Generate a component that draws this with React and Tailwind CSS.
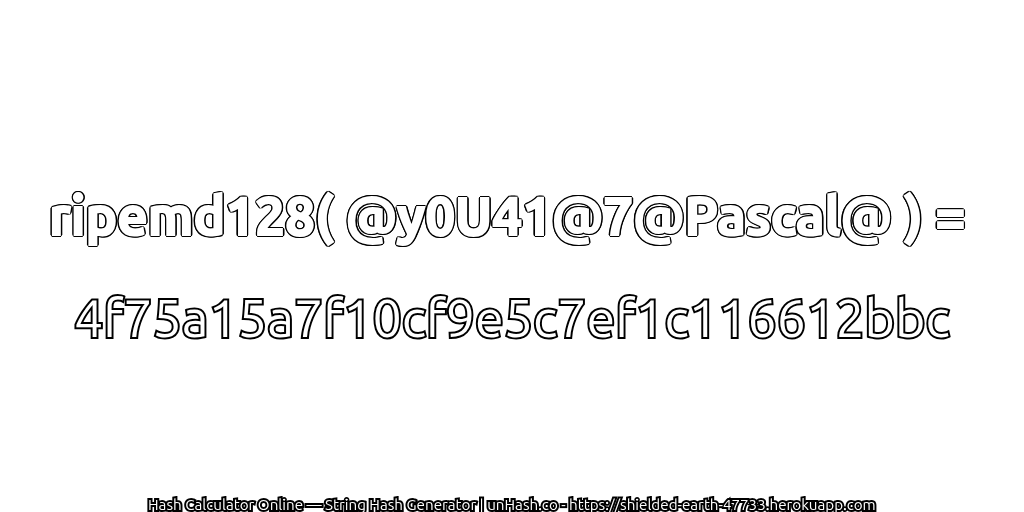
export default function App() {
  const outline = "[-webkit-text-stroke:4px_#000] [paint-order:stroke_fill] text-white [will-change:transform]";
  return (
    <div className="w-[1024px] h-[512px] bg-white flex flex-col items-center font-['Ubuntu','Noto_Sans','Open_Sans',sans-serif] overflow-hidden">
      <div className="flex-1 flex flex-col items-center pt-[185px]">
        <div className="text-[53px] leading-[62px] font-bold whitespace-nowrap text-white pr-[10px] [-webkit-text-stroke:2px_#fff] [will-change:transform] [text-shadow:2.4px_0_0_#000,-2.4px_0_0_#000,0_2.4px_0_#000,0_-2.4px_0_#000,2.1px_1.2px_0_#000,-2.1px_1.2px_0_#000,2.1px_-1.2px_0_#000,-2.1px_-1.2px_0_#000,1.2px_2.1px_0_#000,-1.2px_2.1px_0_#000,1.2px_-2.1px_0_#000,-1.2px_-2.1px_0_#000]">ripemd128( @y0U41@7@Pascal@ ) =</div>
        <div className={`text-[52px] leading-[62px] whitespace-nowrap mt-[40px] ${outline}`}>4f75a15a7f10cf9e5c7ef1c116612bbc</div>
      </div>
      <div className="text-[15.2px] leading-[18px] whitespace-nowrap text-white -mb-[2px] [-webkit-text-stroke:4px_#000] [paint-order:stroke_fill] [will-change:transform]">Hash Calculator Online — String Hash Generator | unHash.co - https://shielded-earth-47733.herokuapp.com</div>
    </div>
  );
}
